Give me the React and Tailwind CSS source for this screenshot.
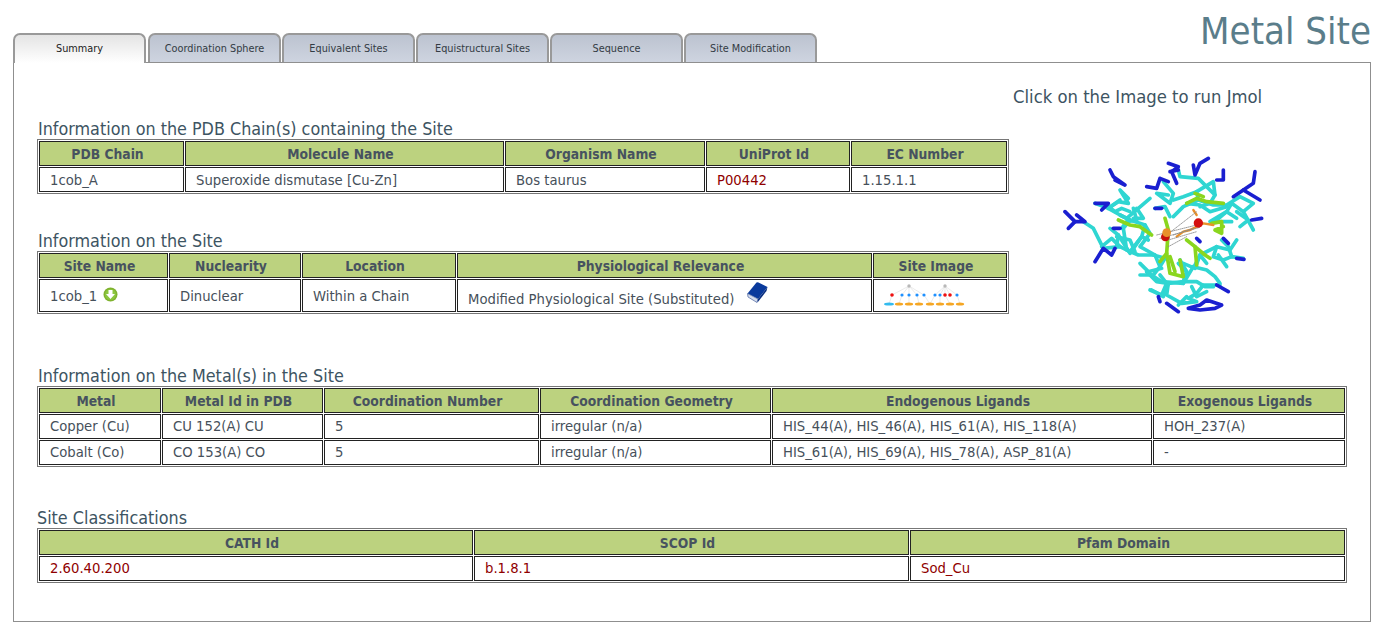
const FONT = "font-['DejaVu_Sans_Condensed','DejaVu_Sans',sans-serif]";

const tabs = ["Summary", "Coordination Sphere", "Equivalent Sites", "Equistructural Sites", "Sequence", "Site Modification"];

function Tabs() {
  return (
    <div className="flex gap-px">
      {tabs.map((t, i) => (
        <div
          key={t}
          className={
            i === 0
              ? "relative z-10 w-[133px] mr-px h-[30px] -mb-px border-2 border-b-0 border-[#999999] rounded-t-[7px] bg-gradient-to-b from-[#e4e4e4] to-white flex items-center justify-center text-[10.8px] text-[#222222]"
              : "w-[133px] h-[29px] pt-[2px] border-2 border-b-0 border-[#999999] rounded-t-[7px] bg-gradient-to-b from-[#bcc3d0] to-[#ced4e0] flex items-center justify-center text-[10.8px] text-[#333b44]"
          }
        >
          {t}
        </div>
      ))}
    </div>
  );
}

function Heading({ children, className = "" }) {
  return <div className={"text-[17.8px] leading-[20px] text-[#3d5462] pl-px " + className}>{children}</div>;
}

function DataTable({ widths, head, rows, width, bodyH = "h-[25px]" }) {
  return (
    <table
      className="table-fixed border-separate border-spacing-[1px] border border-[#777777]"
      style={{ width }}
    >
      <colgroup>
        {widths.map((w, i) => (
          <col key={i} style={{ width: w }} />
        ))}
      </colgroup>
      <thead>
        <tr>
          {head.map((h) => (
            <th
              key={h}
              className="h-[25px] p-0 pt-[2px] pr-[8px] border border-[#222222] bg-[#bcd27f] text-center text-[13.75px] font-bold text-[#47525f]"
            >
              {h}
            </th>
          ))}
        </tr>
      </thead>
      <tbody>
        {rows.map((r, i) => (
          <tr key={i}>
            {r.map((c, j) => (
              <td key={j} className={bodyH + " p-0 pl-[10px] border border-[#222222] text-[14.7px] text-[#46505a] bg-white"}>
                {c}
              </td>
            ))}
          </tr>
        ))}
      </tbody>
    </table>
  );
}

const Red = ({ children }) => <span className="text-[#8f0000]">{children}</span>;

function DownIcon() {
  return (
    <svg width="15" height="15" viewBox="0 0 15 15" className="inline-block align-[-1px] ml-[2px] -mt-[4px]">
      <circle cx="7.5" cy="7.5" r="7" fill="#7fb22e" />
      <circle cx="7.5" cy="7.5" r="5.5" fill="#8cc63f" />
      <path d="M5.5 3h4v4h2.5l-4.5 5-4.5-5h2.5z" fill="#fff" />
    </svg>
  );
}

function BookIcon() {
  return (
    <svg width="21" height="21" viewBox="0 0 21 21" className="inline-block ml-[13px] align-[1px] -mt-[6px]">
      <path d="M0.5 11.5L9.5 0.5q1-.5 2 0l9 4.5-9.5 12z" fill="#0a3a9c" />
      <path d="M0.5 11.5l10.5 5.5-1 3.5-9-5.5z" fill="#d5dcec" stroke="#5c74a8" strokeWidth="0.8" />
      <path d="M11 17L20.5 5l-1 4-9 11.5z" fill="#0a2f80" />
    </svg>
  );
}

function SiteImage() {
  const lines = [
    [25, 4, 8, 13], [25, 4, 18, 13], [25, 4, 25, 13], [25, 4, 33, 13], [25, 4, 40, 13],
    [61, 4, 51, 13], [61, 4, 56, 13], [61, 4, 61, 13], [61, 4, 66, 13], [61, 4, 73, 13],
    [8, 13, 5, 22], [18, 13, 15, 22], [25, 13, 25, 22], [33, 13, 35, 22], [40, 13, 46, 22],
    [51, 13, 46, 22], [56, 13, 56, 22], [61, 13, 66, 22], [73, 13, 76, 22],
  ];
  return (
    <svg width="84" height="28" viewBox="0 0 84 28" className="block">
      {lines.map((l, i) => (
        <line key={i} x1={l[0]} y1={l[1]} x2={l[2]} y2={l[3]} stroke="#dcdcdc" strokeWidth="0.6" />
      ))}
      <circle cx="25" cy="4" r="1.7" fill="#b8b8b8" />
      <circle cx="61" cy="4" r="1.7" fill="#b8b8b8" />
      <circle cx="8" cy="13" r="1.8" fill="#ee1111" />
      {[18, 25, 33, 40, 51, 56, 73].map((x) => (
        <circle key={x} cx={x} cy="13" r="1.6" fill="#1e90ff" />
      ))}
      <circle cx="61" cy="13" r="1.8" fill="#ee1111" />
      <circle cx="66" cy="13" r="1.8" fill="#ee1111" />
      <ellipse cx="5" cy="22" rx="5" ry="1.6" fill="#33bbee" />
      {[15, 25, 35, 46, 56, 66, 76].map((x) => (
        <ellipse key={x} cx={x} cy="22" rx="4.2" ry="1.6" fill="#f5a623" />
      ))}
    </svg>
  );
}

const cyan = [
  "165,190 205,205 240,225 260,235 295,205 330,175",
  "205,205 235,185 265,190 240,150 265,175",
  "200,195 225,215 245,205 270,215",
  "240,225 270,240 315,255 305,290 270,335 240,320 190,325 160,265 130,245",
  "270,240 250,265 260,330 295,345 345,345 360,380 340,405 300,405",
  "315,255 330,280 300,320 345,345",
  "290,205 310,235 280,235",
  "320,395 350,425 385,430 430,425 440,395 420,360",
  "300,370 325,395 365,385",
  "385,430 380,465 425,490 470,485 445,475 470,460 490,435 540,435",
  "430,425 470,425 495,440 520,440",
  "460,380 500,390 525,410 540,430",
  "465,375 480,345 530,320 570,330 590,300",
  "530,320 520,350 550,360 575,350 610,355",
  "575,350 565,320 545,300",
  "400,230 430,200 475,180 520,195 560,195 600,170 640,190 610,215 640,270",
  "610,215 575,190 560,215 510,245 575,245",
  "475,180 470,155 520,125 525,165 475,115 420,110 415,90",
  "525,165 510,190 480,200",
  "370,125 400,160 390,190 350,160 385,165",
  "345,205 375,200 390,230",
  "230,320 235,285 210,265",
  "230,290 270,300 285,335",
  "330,450 365,465 380,430 360,405",
  "415,495 440,470",
  "430,370 465,385 480,345 500,370",
  "400,180 430,170 470,155",
  "530,240 560,215 590,235",
  "440,190 480,195 510,215 560,200",
  "280,205 290,240 260,245 245,265",
  "235,285 270,340 305,290 325,300",
  "320,395 365,425 430,430 460,380",
  "335,450 370,470 385,430",
  "415,370 440,395 430,430",
  "240,180 205,205",
  "185,320 215,295 240,320",
  "340,345 375,355 360,380",
  "455,440 470,470 500,455",
  "590,215 625,240 600,260",
  "535,345 560,380",
];
const blue = [
  "75,215 105,245 135,245 110,225",
  "85,265 105,245",
  "165,365 190,325 215,345 225,325",
  "165,190 205,190 185,210",
  "210,90 220,110 255,135 225,120",
  "320,140 350,145 360,115 385,125",
  "385,70 415,80 395,95 410,130",
  "390,95 415,90",
  "460,75 465,105 480,70 505,55",
  "550,90 550,120 530,120",
  "645,95 640,130 610,150 660,180",
  "610,150 580,170",
  "635,240 665,235",
  "530,435 565,455",
  "445,505 480,510 525,505 545,495 500,480 480,495 445,505",
  "380,490 415,515",
  "220,265 240,265",
  "345,205 365,205",
  "590,355 612,358",
  "550,295 565,310",
  "470,295 480,305",
  "355,470 360,485",
];
const green = [
  "235,240 270,255 300,260 335,285",
  "375,235 385,270 380,340 390,400 430,410 420,360",
  "380,340 360,365",
  "390,350 405,395",
  "440,190 470,175 500,185 550,190",
  "465,160 490,170",
  "515,250 545,245 545,280 525,270 550,260",
  "440,300 465,320 495,345 510,355",
  "465,320 470,375",
];

function Molecule() {
  return (
    <svg width="240" height="190" viewBox="0 0 720 570" className="block blur-[0.4px]">
      <g fill="none" strokeLinecap="round" strokeLinejoin="round">
        {cyan.map((p, i) => <polyline key={i} points={p} stroke="#2fd6d2" strokeWidth="11" />)}
        {blue.map((p, i) => <polyline key={i} points={p} stroke="#1a1fd0" strokeWidth="11" />)}
        {green.map((p, i) => <polyline key={i} points={p} stroke="#8ad61e" strokeWidth="11" />)}
        <polyline points="410,290 430,275 450,270 490,250 520,255" stroke="#e8902a" strokeWidth="7" />
        <polyline points="460,210 470,225" stroke="#e8902a" strokeWidth="7" />
        <g stroke="#8a8a8a" strokeWidth="2.5" strokeDasharray="3 3">
          <line x1="380" y1="285" x2="470" y2="215" />
          <line x1="350" y1="285" x2="470" y2="255" />
          <line x1="360" y1="295" x2="480" y2="262" />
          <line x1="385" y1="300" x2="470" y2="275" />
          <line x1="385" y1="320" x2="440" y2="290" />
          <line x1="400" y1="285" x2="460" y2="265" />
        </g>
      </g>
      <circle cx="376" cy="291" r="13" fill="#c8100c" />
      <circle cx="380" cy="278" r="13" fill="#e8902a" />
      <circle cx="475" cy="249" r="14" fill="#d40f0f" />
    </svg>
  );
}

const Down1 = ({ children }) => <span className="block leading-[20px]">{children}</span>;

export default function App() {
  return (
    <div className={FONT + " w-[1385px] h-[635px] bg-white overflow-hidden"}>
      <div className="px-[13px] pt-[33px] relative">
        <Tabs />
        <div className="absolute right-[14px] top-[9px] text-[38px] leading-[44px] text-[#5a7d8a]">Metal Site</div>
        <div className="w-[1358px] h-[560px] border border-[#8f8f8f] pl-[23px] pt-[25px]">
          <div className="flex">
            <div className="w-[971px]">
              <div className="h-[31px]" />
              <Heading>Information on the PDB Chain(s) containing the Site</Heading>
              <DataTable
                width={971}
                widths={[145, 319, 200, 144, 156]}
                head={["PDB Chain", "Molecule Name", "Organism Name", "UniProt Id", "EC Number"]}
                rows={[[
                  <Down1>1cob_A</Down1>,
                  <Down1>Superoxide dismutase [Cu-Zn]</Down1>,
                  <Down1>Bos taurus</Down1>,
                  <Down1><Red>P00442</Red></Down1>,
                  <Down1>1.15.1.1</Down1>,
                ]]}
              />
              <Heading className="mt-[37px]">Information on the Site</Heading>
              <DataTable
                width={971}
                widths={[129, 132, 154, 415, 134]}
                bodyH="h-[33px]"
                head={["Site Name", "Nuclearity", "Location", "Physiological Relevance", "Site Image"]}
                rows={[[
                  <Down1>1cob_1 <DownIcon /></Down1>,
                  <Down1>Dinuclear</Down1>,
                  <Down1>Within a Chain</Down1>,
                  <span className="block pt-[5px] leading-[20px]">Modified Physiological Site (Substituted)<BookIcon /></span>,
                  <SiteImage />,
                ]]}
              />
            </div>
            <div className="flex-1 pl-[5px]">
              <div className="text-[18.3px] leading-[20px] -mt-px text-[#3d5462]">Click on the Image to run Jmol</div>
              <div className="mt-[33px] ml-[27px]">
                <Molecule />
              </div>
            </div>
          </div>
          <Heading className="mt-[36px]">Information on the Metal(s) in the Site</Heading>
          <DataTable
            width={1310}
            widths={[122, 161, 215, 231, 380, 192]}
            head={["Metal", "Metal Id in PDB", "Coordination Number", "Coordination Geometry", "Endogenous Ligands", "Exogenous Ligands"]}
            rows={[
              ["Copper (Cu)", "CU 152(A) CU", "5", "irregular (n/a)", "HIS_44(A), HIS_46(A), HIS_61(A), HIS_118(A)", "HOH_237(A)"],
              ["Cobalt (Co)", "CO 153(A) CO", "5", "irregular (n/a)", "HIS_61(A), HIS_69(A), HIS_78(A), ASP_81(A)", "-"],
            ]}
          />
          <Heading className="mt-[41px] -ml-px">Site Classifications</Heading>
          <DataTable
            width={1310}
            widths={[434, 435, 435]}
            head={["CATH Id", "SCOP Id", "Pfam Domain"]}
            rows={[[<Red>2.60.40.200</Red>, <Red>b.1.8.1</Red>, <Red>Sod_Cu</Red>]]}
          />
        </div>
      </div>
    </div>
  );
}
